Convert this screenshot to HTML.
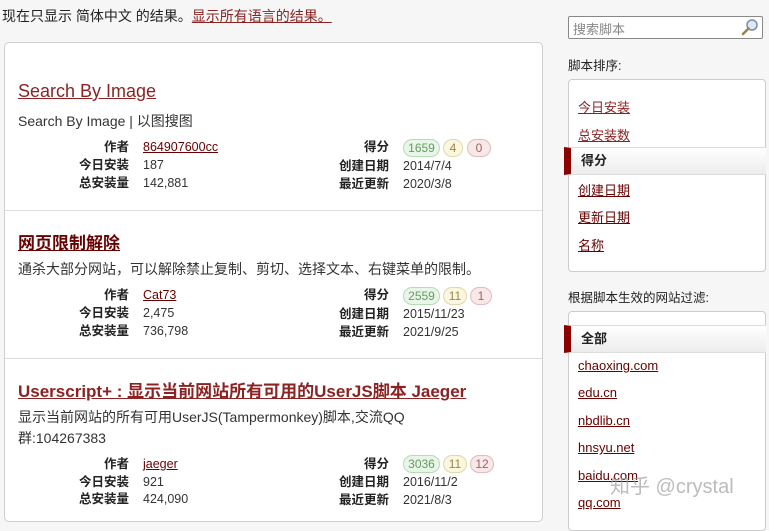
<!DOCTYPE html>
<html><head><meta charset="utf-8"><style>
*{margin:0;padding:0;box-sizing:border-box}
body{width:769px;height:516px;overflow:hidden;background:#f6f6f6;font-family:"Liberation Sans","Noto Sans CJK SC",sans-serif;color:#222;position:relative;font-size:13px}
.a{position:absolute;white-space:nowrap}
a{color:#670000;text-decoration:underline}
.card{position:absolute;left:4px;top:42px;width:539px;height:480px;background:#fff;border:1px solid #cfcfcf;border-radius:5px}
.sep{position:absolute;left:5px;width:537px;height:1px;background:#ddd}
.t{font-size:18px;color:#8b2323;text-decoration:underline}
.t2{font-size:17px;font-weight:bold;color:#670000;text-decoration:underline}
.d{font-size:14px;color:#333}
.lb{font-weight:bold;font-size:12.5px;text-align:right;width:90px;line-height:18px;height:18px}
.v{font-size:12.5px;color:#333;line-height:18px;height:18px}
.b{position:absolute;height:18px;border-radius:9px;font-size:12px;line-height:16px;text-align:center;border:1px solid}
.g{background:#e8f6e8;border-color:#b5dbb5;color:#669966}
.y{background:#faf6e0;border-color:#e0d8a8;color:#998844}
.r{background:#f8e8e8;border-color:#e0bcbc;color:#996666}
.box{position:absolute;left:568px;width:198px;background:#fff;border:1px solid #ccc;border-radius:4px}
.it{position:absolute;left:578px;font-size:13px}
.hl{position:absolute;left:564px;width:202px;height:28px;background:linear-gradient(#fff,#ececec);border-top:1px solid #ddd;border-bottom:1px solid #ddd;border-left:7px solid #8b0000;font-weight:bold;font-size:13px;padding-left:10px;line-height:26px}
</style></head><body>
<div class="a" style="left:2px;top:6px;font-size:14px">现在只显示 简体中文 的结果。<a style="color:#8b2323">显示所有语言的结果。</a></div>
<div class="card"></div>
<div class="sep" style="top:210px"></div>
<div class="sep" style="top:358px"></div>

<div class="a t" style="left:18px;top:81px">Search By Image</div>
<div class="a d" style="left:18px;top:111px">Search By Image | 以图搜图</div>
<div class="a lb" style="left:39px;top:138px">作者</div><div class="a v" style="left:143px;top:138px"><a>864907600cc</a></div>
<div class="a lb" style="left:39px;top:156px">今日安装</div><div class="a v" style="left:143px;top:156px">187</div>
<div class="a lb" style="left:39px;top:174px">总安装量</div><div class="a v" style="left:143px;top:174px">142,881</div>
<div class="a lb" style="left:299px;top:138px">得分</div>
<div class="b g" style="left:403px;top:139px;width:37px">1659</div><div class="b y" style="left:443px;top:139px;width:20px">4</div><div class="b r" style="left:467px;top:139px;width:24px">0</div>
<div class="a lb" style="left:299px;top:157px">创建日期</div><div class="a v" style="left:403px;top:157px">2014/7/4</div>
<div class="a lb" style="left:299px;top:175px">最近更新</div><div class="a v" style="left:403px;top:175px">2020/3/8</div>

<div class="a t2" style="left:18px;top:229px">网页限制解除</div>
<div class="a d" style="left:18px;top:259px">通杀大部分网站，可以解除禁止复制、剪切、选择文本、右键菜单的限制。</div>
<div class="a lb" style="left:39px;top:286px">作者</div><div class="a v" style="left:143px;top:286px"><a>Cat73</a></div>
<div class="a lb" style="left:39px;top:304px">今日安装</div><div class="a v" style="left:143px;top:304px">2,475</div>
<div class="a lb" style="left:39px;top:322px">总安装量</div><div class="a v" style="left:143px;top:322px">736,798</div>
<div class="a lb" style="left:299px;top:286px">得分</div>
<div class="b g" style="left:403px;top:287px;width:37px">2559</div><div class="b y" style="left:443px;top:287px;width:24px">11</div><div class="b r" style="left:470px;top:287px;width:22px">1</div>
<div class="a lb" style="left:299px;top:305px">创建日期</div><div class="a v" style="left:403px;top:305px">2015/11/23</div>
<div class="a lb" style="left:299px;top:323px">最近更新</div><div class="a v" style="left:403px;top:323px">2021/9/25</div>

<div class="a t" style="left:18px;top:377px;font-weight:bold;font-size:17px">Userscript+ : 显示当前网站所有可用的UserJS脚本 Jaeger</div>
<div class="a d" style="left:18px;top:407px">显示当前网站的所有可用UserJS(Tampermonkey)脚本,交流QQ</div>
<div class="a d" style="left:18px;top:428px">群:104267383</div>
<div class="a lb" style="left:39px;top:455px">作者</div><div class="a v" style="left:143px;top:455px"><a>jaeger</a></div>
<div class="a lb" style="left:39px;top:473px">今日安装</div><div class="a v" style="left:143px;top:473px">921</div>
<div class="a lb" style="left:39px;top:490px">总安装量</div><div class="a v" style="left:143px;top:490px">424,090</div>
<div class="a lb" style="left:299px;top:455px">得分</div>
<div class="b g" style="left:403px;top:455px;width:37px">3036</div><div class="b y" style="left:443px;top:455px;width:24px">11</div><div class="b r" style="left:470px;top:455px;width:24px">12</div>
<div class="a lb" style="left:299px;top:473px">创建日期</div><div class="a v" style="left:403px;top:473px">2016/11/2</div>
<div class="a lb" style="left:299px;top:491px">最近更新</div><div class="a v" style="left:403px;top:491px">2021/8/3</div>

<div class="a" style="left:568px;top:16px;width:195px;height:23px;background:#fff;border:1px solid #888;border-radius:2px;font-size:13px;color:#888;padding:2px 4px">搜索脚本</div>
<svg class="a" style="left:741px;top:18px" width="18" height="18" viewBox="0 0 18 18"><circle cx="11" cy="7" r="5" fill="#dde8f4" stroke="#7a8ea6" stroke-width="1.5"/><path d="M7.5 10.5 L2 16" stroke="#a08050" stroke-width="2.5" stroke-linecap="round"/></svg>
<div class="a" style="left:568px;top:55px;font-size:12.5px">脚本排序:</div>
<div class="box" style="top:79px;height:193px"></div>
<div class="it" style="top:97px"><a style="color:#8b2323">今日安装</a></div>
<div class="it" style="top:125px"><a style="color:#8b2323">总安装数</a></div>
<div class="hl" style="top:147px">得分</div>
<div class="it" style="top:180px"><a>创建日期</a></div>
<div class="it" style="top:207px"><a>更新日期</a></div>
<div class="it" style="top:235px"><a>名称</a></div>
<div class="a" style="left:568px;top:287px;font-size:12.5px">根据脚本生效的网站过滤:</div>
<div class="box" style="top:311px;height:220px"></div>
<div class="hl" style="top:325px">全部</div>
<div class="it" style="top:358px"><a>chaoxing.com</a></div>
<div class="it" style="top:385px"><a>edu.cn</a></div>
<div class="it" style="top:413px"><a>nbdlib.cn</a></div>
<div class="it" style="top:440px"><a>hnsyu.net</a></div>
<div class="it" style="top:468px"><a>baidu.com</a></div>
<div class="it" style="top:495px"><a>qq.com</a></div>
<div class="a" style="left:610px;top:470px;font-size:20px;color:rgba(160,160,160,0.7)">知乎 @crystal</div>
</body></html>
